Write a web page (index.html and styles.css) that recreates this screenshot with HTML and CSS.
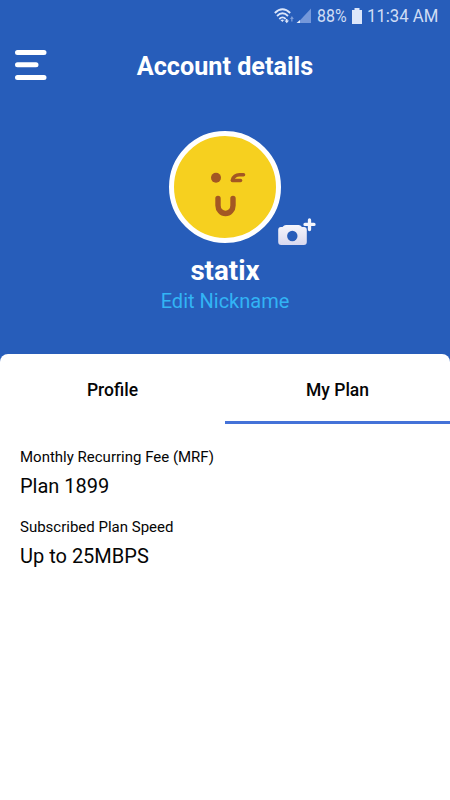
FILE: index.html
```html
<!DOCTYPE html>
<html lang="en">
<head>
<meta charset="utf-8">
<title>Account details</title>
<link rel="stylesheet" href="styles.css">
</head>
<body>
<div class="status">
  <svg class="signal" width="38" height="18" viewBox="0 0 38 18" fill="none">
    <g stroke="#dce6fa" stroke-width="1.8">
      <path d="M.8 6Q8.500 -1.500 16.200 6"/>
      <path d="M3 9Q8.500 3.500 14 9"/>
      <path d="M5.300 12Q8.500 8.800 11.700 12"/>
    </g>
    <path d="M6.500 13.300Q8.500 11.800 10 13l-1.500 2z" fill="#dce6fa"/>
    <path d="M10.500 13.500h1.500v-1.500h1.500v1.500h1.500l-2.200 2.700z" fill="#dce6fa"/>
    <path d="M16 12h3.800l-1.900-2.900zM17.200 12h1.300v2.500h-1.300z" fill="#7d9edb"/>
    <path d="M37 1.500V15.900H23.500z" fill="#7598da"/>
    <path d="M26 13v2.900h-3.500z" fill="#e6edfb"/>
  </svg>
  <span class="percent"><span>88%</span></span>
  <svg class="battery" width="10" height="16" viewBox="0 0 10 16"><path d="M2.500 0h5v2H10v14H0V2h2.500z" fill="#dce6fa"/></svg>
  <span class="time"><span>11:34 AM</span></span>
</div>
<header class="header">
  <svg class="menu" width="32" height="30" viewBox="0 0 32 30" stroke="#fff" stroke-width="5" stroke-linecap="round"><path d="M2.500 2.500H29M2.500 14.700H21M2.500 27.500H29"/></svg>
  <h1>Account details</h1>
</header>
<section class="profile">
  <div class="avatar">
    <svg width="112" height="112" viewBox="0 0 112 112" fill="none" stroke="#a35723" stroke-linecap="round">
      <circle cx="56" cy="56" r="53.500" fill="#f6d01f" stroke="#fff" stroke-width="5"/>
      <circle cx="47" cy="46.800" r="5" fill="#a35723" stroke="none"/>
      <path d="M74.500 43.800H70.500Q65 43.800 63.500 49" stroke-width="3.600"/>
      <path d="M63.500 49.500H71.500" stroke-width="3.600"/>
      <path d="M49 67.500V74.500a7.500 8 0 0 0 15 0V67.500" stroke-width="5.400"/>
    </svg>
    <svg class="camera" width="38" height="28" viewBox="0 0 38 28">
      <defs><linearGradient id="body" x2="0" y2="1"><stop stop-color="#f6f6fc"/><stop offset="1" stop-color="#d9d9ef"/></linearGradient></defs>
      <path d="M3 9H4.500Q6 6.900 8 6.900H20.500Q22.500 6.900 24 9H26Q28.800 9 28.800 12V24Q28.800 27 25.800 27H3.200Q.2 27 .2 24V12Q.2 9 3 9z" fill="url(#body)"/>
      <circle cx="14.300" cy="18" r="5.200" fill="#275dba"/>
      <path d="M31.500 2V11.500M27 6.400H36" stroke="#f5f6fc" stroke-width="3.300" stroke-linecap="round"/>
    </svg>
  </div>
  <h2>statix</h2>
  <a class="edit">Edit Nickname</a>
</section>
<main class="sheet">
  <nav class="tabs"><div>Profile</div><div class="active">My Plan</div></nav>
  <dl>
    <dt>Monthly Recurring Fee (MRF)</dt><dd>Plan 1899</dd>
    <dt>Subscribed Plan Speed</dt><dd>Up to 25MBPS</dd>
  </dl>
</main>
</body>
</html>
```
FILE: styles.css
```css
* { box-sizing: border-box; }
body { margin: 0; height: 800px; overflow: hidden; background: #275dba; font-family: Roboto, "Liberation Sans", sans-serif; color: #050505; display: flex; flex-direction: column; }
h1, h2, dl, dd { margin: 0; }
svg { display: block; flex: none; }
.status { height: 32px; flex: none; display: flex; align-items: center; padding-left: 274px; color: #d0ddf5; font-size: 18.5px; }
.signal { margin-right: 5px; }
.percent { width: 35px; }
.time { width: 76px; margin-left: 5px; }
.percent span, .time span { display: inline-block; white-space: nowrap; transform-origin: 0 50%; }
.percent span { transform: scaleX(.86); }
.time span { transform: scaleX(.905); }
.header { height: 68px; flex: none; display: grid; grid-template-columns: 32px 1fr 32px; align-items: center; padding: 0 15px 2px; }
h1 { padding-top: 4px; text-align: center; font-size: 25.2px; line-height: 30px; font-weight: 700; color: #fff; }
.profile { height: 254px; flex: none; display: flex; flex-direction: column; align-items: center; padding-top: 31px; }
.avatar { position: relative; height: 112px; }
.camera { position: absolute; left: 109px; top: 87px; }
h2 { margin-top: 12px; font-size: 27.7px; line-height: 32px; font-weight: 700; color: #fff; }
.edit { margin-top: 2px; font-size: 20px; line-height: 24px; color: #32b4f5; }
.sheet { flex: 1; background: #fff; border-radius: 8px 8px 0 0; }
.tabs { display: grid; grid-template-columns: 1fr 1fr; height: 70px; font-size: 17.5px; font-weight: 500; text-align: center; line-height: 72px; }
.tabs div { height: 70px; }
.active { border-bottom: 3px solid #4472d8; }
dl { padding: 22px 20px; }
dt { font-size: 15px; line-height: 22px; }
dd { font-size: 20px; line-height: 24px; margin: 6px 0 18px; }
```
